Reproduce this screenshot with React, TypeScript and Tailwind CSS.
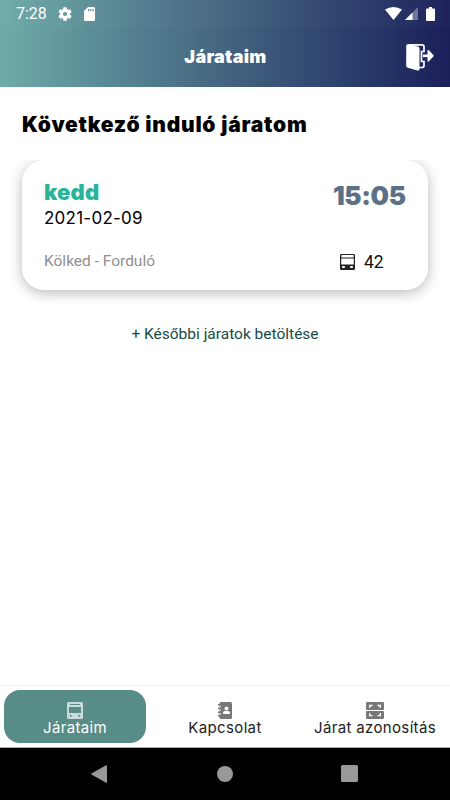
import { FC } from 'react';

const BusIcon: FC<{ className?: string }> = ({ className }) => (
  <svg viewBox="0 0 16 17" className={className} fill="currentColor">
    <path
      fillRule="evenodd"
      d="M1.500 0h13A1.500 1.500 0 0 1 16 1.500v14a1.500 1.500 0 0 1-1.500 1.500h-13A1.500 1.500 0 0 1 0 15.500v-14A1.500 1.500 0 0 1 1.500 0ZM3 2v1h10V2H3ZM2 5v6h12V5H2Zm1.700 7.800a1 1 0 1 0 0 2 1 1 0 0 0 0-2Zm8.600 0a1 1 0 1 0 0 2 1 1 0 0 0 0-2Z"
    />
  </svg>
);

const BusOutlineIcon: FC<{ className?: string }> = ({ className }) => (
  <svg viewBox="0 0 15 16" className={className} fill="currentColor">
    <path
      fillRule="evenodd"
      d="M1.200 0h12.600A1.200 1.200 0 0 1 15 1.200v13.600a1.200 1.200 0 0 1-1.200 1.200H1.200A1.200 1.200 0 0 1 0 14.800V1.200A1.200 1.200 0 0 1 1.200 0Zm.2 1v2.500h12.200V1ZM1.200 4.500v6h12.600v-6Zm1 7.500v2h2.600v-2Zm8 0v2h2.600v-2Z"
    />
  </svg>
);

const App: FC = () => {
  return (
    <div className="flex h-[800px] w-[450px] flex-col overflow-hidden bg-white font-['Inter',sans-serif]">
      {/* Header */}
      <header className="h-[87px] shrink-0 bg-linear-to-r from-[#6eaca8] via-[#446480] to-[#1b1f5a] text-white">
        {/* Status bar */}
        <div className="flex h-[27px] items-center bg-white/2 pl-4 pr-[15px] font-['Roboto',sans-serif]">
          <span className="w-[42px] text-[16px] leading-none">7:28</span>
          <svg viewBox="2 2 20 20" className="h-[14px] w-[14px]" fill="currentColor">
            <path d="M19.14 12.94a7.5 7.5 0 0 0 0-1.88l2.03-1.58a.5.5 0 0 0 .12-.61l-1.92-3.32a.5.5 0 0 0-.59-.22l-2.39.96a7 7 0 0 0-1.62-.94l-.36-2.54a.5.5 0 0 0-.48-.41h-3.84a.5.5 0 0 0-.47.41l-.36 2.54a7 7 0 0 0-1.62.94l-2.39-.96a.5.5 0 0 0-.59.22L2.74 8.87a.5.5 0 0 0 .12.61l2.03 1.58a7.5 7.5 0 0 0 0 1.88l-2.03 1.58a.5.5 0 0 0-.12.61l1.92 3.32c.12.22.37.29.59.22l2.39-.96c.5.38 1.03.7 1.62.94l.36 2.54c.05.24.24.41.48.41h3.84c.24 0 .44-.17.47-.41l.36-2.54a7 7 0 0 0 1.62-.94l2.39.96c.22.08.47 0 .59-.22l1.92-3.32a.5.5 0 0 0-.12-.61zM12 15A3 3 0 1 1 12 9a3 3 0 0 1 0 6" />
          </svg>
          <svg viewBox="0 0 11 14" className="ml-3 h-[14px] w-[11px]" fill="currentColor">
            <path fillRule="evenodd" d="M4 0h5.800A1.200 1.200 0 0 1 11 1.200v11.600A1.200 1.200 0 0 1 9.800 14H1.200A1.200 1.200 0 0 1 0 12.800V4Zm0 2v2.300h1.200V2Zm2.200 0v2.300h1.200V2Zm2.200 0v2.300h1.200V2Z" />
          </svg>
          <svg viewBox="0 0 17 13" className="ml-auto h-[13px] w-[17px]" fill="currentColor">
            <path d="M0 2.500Q8.500-2.500 17 2.500L8.500 13Z" />
          </svg>
          <svg viewBox="0 0 13 13" className="ml-[3px] h-[13px] w-[13px]" fill="currentColor">
            <path d="M13 0v13H0Z" opacity=".35" />
            <path d="M7.500 5.500V13H0Z" />
          </svg>
          <svg viewBox="0 0 9 14" className="ml-2 h-[14px] w-[9px]" fill="currentColor">
            <path d="M3 0h3v1.500h2a1 1 0 0 1 1 1V13a1 1 0 0 1-1 1H1a1 1 0 0 1-1-1V2.500a1 1 0 0 1 1-1h2Z" />
          </svg>
        </div>
        {/* Title */}
        <div className="grid h-[60px] grid-cols-[1fr_auto_1fr] items-center pr-4">
          <h1 className="col-start-2 pl-[17px] text-[18px] font-black leading-7 tracking-[0.3px]">Járataim</h1>
          <svg viewBox="0 0 28 28" className="h-7 w-7 justify-self-end" fill="none" stroke="currentColor">
            <path d="M3 1 12 3.500Q13.500 4 13.500 5.500V26Q13.500 28 11.500 27.500L2.500 25Q.2 24.500.2 23V3Q.2 1 3 1Z" fill="currentColor" stroke="none" />
            <path d="M3 1.800h13a2 2 0 0 1 2 2v4.700h-2.500v10h2.500v4a2 2 0 0 1-2 2h-3" strokeWidth="1.700" />
            <path d="M17 12.800h6" strokeWidth="2.600" />
            <path d="M21.500 7.500v10.600q.2 1 1.100.4l4.800-5q.6-.7 0-1.400l-4.800-5q-.9-.6-1.100.4Z" fill="currentColor" stroke="none" />
          </svg>
        </div>
      </header>

      {/* Main content */}
      <main className="flex-1">
        <h2 className="pl-[22px] pt-[22px] text-[21px] font-black leading-[31px] tracking-[0.76px] text-black">
          Következő induló járatom
        </h2>
        <div className="mt-[20px] overflow-hidden px-[22px] pb-6">
          <section className="flex h-[130px] justify-between rounded-[22px] bg-white px-[22px] pt-[19px] shadow-[0_3px_14px_rgba(0,0,0,0.28)]">
            <div>
              <p className="pb-px text-[22px] font-black leading-[26px] tracking-[0.2px] text-[#29b59c]">kedd</p>
              <p className="text-[17px] leading-[24px] tracking-[0.25px] text-black">2021-02-09</p>
              <p className="mt-5 font-['Roboto',sans-serif] text-[15.500px] leading-[22px] text-[#8f8f8f]">Kölked - Forduló</p>
            </div>
            <div className="w-[73px]">
              <p className="mt-0.5 text-[26px] font-black leading-[30px] tracking-[-0.4px] text-[#5a7188]">15:05</p>
              <div className="mt-[39px] flex items-center gap-[9px] pl-[7px]">
                <BusOutlineIcon className="h-4 w-[15px] text-[#222]" />
                <span className="pt-px font-['Roboto',sans-serif] text-[17.500px] leading-[22px] text-[#111]">42</span>
              </div>
            </div>
          </section>
        </div>
        <button className="mt-[9px] block w-full text-center font-['Roboto',sans-serif] text-[15.500px] leading-[22px] text-[#164b47]">
          + Későbbi járatok betöltése
        </button>
      </main>

      {/* Bottom tabs */}
      <nav className="grid h-[63px] shrink-0 grid-cols-3 border-y border-t-[#f0f0f0] border-b-[#aaa] pb-1 pt-1 text-[15px] leading-[17px] tracking-[0.35px] text-[#222]">
        <a className="mx-1 flex flex-col items-center rounded-[16px] bg-[#588c87] pt-3 text-white">
          <BusIcon className="h-[17px] w-4 text-[#c9dcda]" />
          Járataim
        </a>
        <a className="flex flex-col items-center pt-3">
          <svg viewBox="0 0 14 17" className="h-[17px] w-[14px]" fill="#777">
            <rect x="1.500" width="12.500" height="17" rx="1.500" />
            <path d="M0 2h3v1.500H0ZM0 5.700h3v1.500H0ZM0 9.400h3v1.500H0ZM0 13.100h3v1.500H0Z" />
            <circle cx="8.500" cy="6.400" r="2" fill="#fff" />
            <path d="M5 12v-1.200Q5 9 7 9h3q2 0 2 1.800V12Z" fill="#fff" />
            <path d="M2.300 3.500v2M2.300 7.200v2M2.300 10.900v2" stroke="#fff" strokeWidth=".7" />
          </svg>
          Kapcsolat
        </a>
        <a className="flex flex-col items-center pt-3">
          <svg viewBox="0 0 18 17" className="h-[17px] w-[18px]" fill="#777">
            <rect width="18" height="8" rx="1.300" />
            <rect y="9" width="18" height="8" rx="1.300" />
            <path
              d="M3.700 6V3.500h2.800M11.500 3.500h2.800V6M3.700 11v2.700h2.800M11.500 13.700h2.800V11"
              fill="none"
              stroke="#fff"
              strokeWidth="1.300"
            />
          </svg>
          Járat azonosítás
        </a>
      </nav>

      {/* Android navigation */}
      <footer className="grid h-[52px] shrink-0 grid-cols-3 place-items-center bg-black pb-px text-[#999]">
        <svg viewBox="0 0 16 18" className="mr-[-47px] h-[18px] w-4" fill="currentColor">
          <path d="M16 .8v16.400q0 1-.9.5L.5 9.600Q-.2 9 .5 8.400L15.100.3q.9-.5.9.5Z" />
        </svg>
        <span className="h-4 w-4 rounded-full bg-[#999]" />
        <span className="ml-[-51px] h-[17px] w-[17px] rounded-[1.500px] bg-[#999]" />
      </footer>
    </div>
  );
};

export default App;
